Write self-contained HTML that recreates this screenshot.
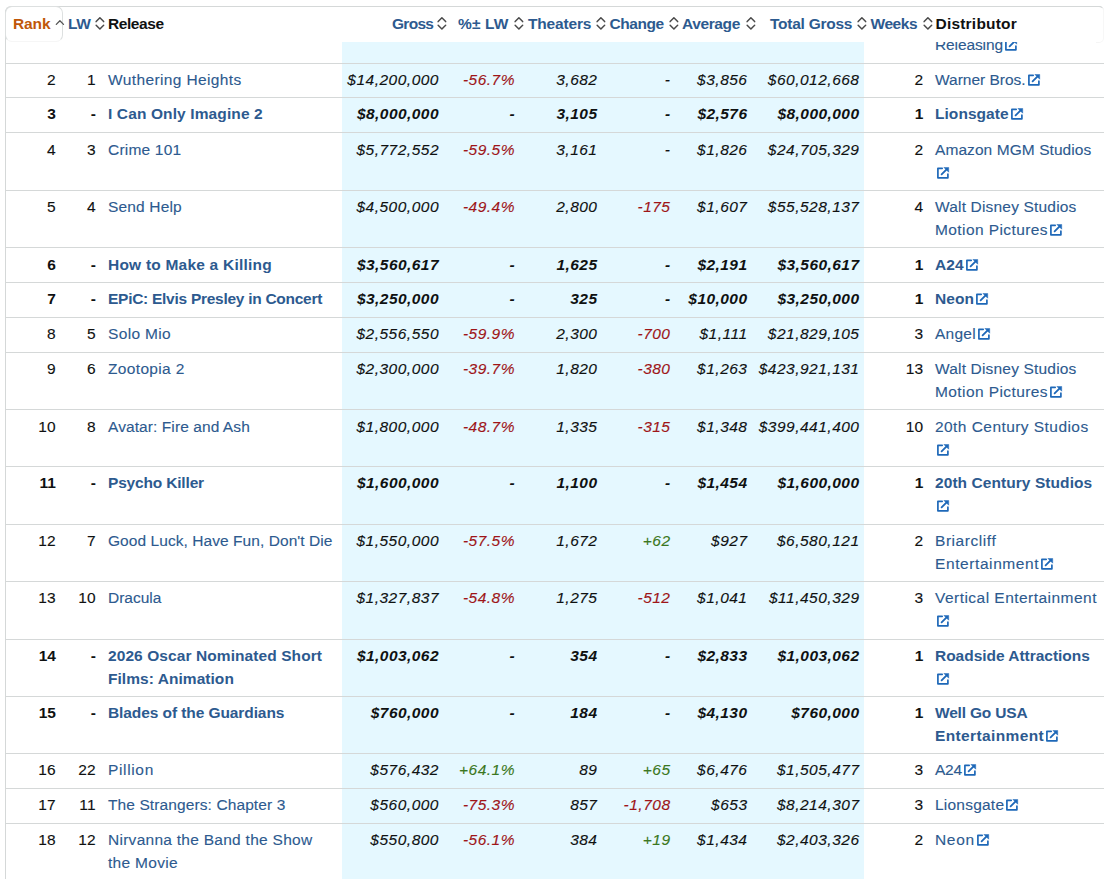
<!DOCTYPE html>
<html><head><meta charset="utf-8">
<style>
html,body{margin:0;padding:0;background:#fff;width:1113px;height:879px;overflow:hidden;position:relative}
body{font-family:"Liberation Sans",sans-serif;font-size:15.5px;line-height:22.67px;color:#0f1111}
#bluecol{position:absolute;left:342px;top:42px;width:522px;height:837px;background:#e5f8ff}
#lborder{position:absolute;left:5px;top:10px;width:1px;height:869px;background:#d5d8d8}
.hl{position:absolute;left:5px;width:1099px;height:1px;background:#d5d8d8}
.c{position:absolute;white-space:nowrap;-webkit-text-stroke:0.12px currentColor}
.c.b{-webkit-text-stroke:0px currentColor}
.r{text-align:right}
.tx{color:#0f1111;letter-spacing:0.3px}
.lk{color:#2d5a8f;letter-spacing:0.25px}
.it{font-style:italic;color:#0f1111;letter-spacing:0.5px}
.b{font-weight:bold;letter-spacing:0.05px}
.it.b{letter-spacing:0.45px}
.red{color:#9e1518}
.grn{color:#3a7720}
.ext{vertical-align:-2px;margin-left:2px}
#hdr{position:absolute;left:5px;top:6px;width:1098px;height:35px;background:#fff;border-top:1px solid #d5d8d8;border-left:1px solid #d5d8d8;border-radius:6px 5px 0 0}
#hdrr{position:absolute;left:1096px;top:6px;width:7px;height:35px;border-right:1px solid #f7f7f7;border-top:1px solid #d5d8d8;border-bottom:1px solid #f5f5f5;border-radius:0 5px 5px 0;background:transparent}
#rankbox{position:absolute;left:5px;top:6px;width:56px;height:34px;border:1px solid #dde0e0;border-bottom-color:#f6f6f6;border-radius:7px}
.h{position:absolute;font-weight:bold;color:#2d5a8f;white-space:nowrap;letter-spacing:-0.3px}
.ic{position:absolute;line-height:0}
.ic svg{display:block}
</style></head><body>
<div id="bluecol"></div>
<div id="lborder"></div>
<div class="hl" style="top:63px"></div><div class="hl" style="top:97px"></div><div class="hl" style="top:132px"></div><div class="hl" style="top:190px"></div><div class="hl" style="top:247px"></div><div class="hl" style="top:282px"></div><div class="hl" style="top:317px"></div><div class="hl" style="top:352px"></div><div class="hl" style="top:409px"></div><div class="hl" style="top:466px"></div><div class="hl" style="top:524px"></div><div class="hl" style="top:581px"></div><div class="hl" style="top:639px"></div><div class="hl" style="top:696px"></div><div class="hl" style="top:753px"></div><div class="hl" style="top:788px"></div><div class="hl" style="top:823px"></div>
<div class="c lk" style="top:34.00px;left:935.00px"><span style="letter-spacing:-0.113px">Releasing</span><svg class="ext" width="13" height="13" viewBox="0 0 13 13"><path d="M5.2 1.3H0.9V10.8H10.9V7.2" fill="none" stroke="#1e68b8" stroke-width="1.7" stroke-linejoin="round" stroke-linecap="round"/><path d="M4.6 7.4L9.6 2.4" stroke="#1e68b8" stroke-width="1.8" stroke-linecap="round"/><path d="M6.9 0.4H11.7V5.2Z" fill="#1e68b8" stroke="#1e68b8" stroke-width="0.5" stroke-linejoin="round"/></svg></div><div class="c r tx" style="top:69.00px;right:1057.00px">2</div><div class="c r tx" style="top:69.00px;right:1017.00px">1</div><div class="c lk" style="top:69.00px;left:108.00px"><span style="letter-spacing:0.375px">Wuthering Heights</span></div><div class="c r it" style="top:69.00px;right:674.00px">$14,200,000</div><div class="c r it red" style="top:69.00px;right:598.00px">-56.7%</div><div class="c r it" style="top:69.00px;right:515.50px">3,682</div><div class="c r it" style="top:69.00px;right:442.50px">-</div><div class="c r it" style="top:69.00px;right:365.50px">$3,856</div><div class="c r it" style="top:69.00px;right:253.50px">$60,012,668</div><div class="c r tx" style="top:69.00px;right:189.50px">2</div><div class="c lk" style="top:69.00px;left:935.00px"><span style="letter-spacing:-0.009px">Warner Bros.</span><svg class="ext" width="13" height="13" viewBox="0 0 13 13"><path d="M5.2 1.3H0.9V10.8H10.9V7.2" fill="none" stroke="#1e68b8" stroke-width="1.7" stroke-linejoin="round" stroke-linecap="round"/><path d="M4.6 7.4L9.6 2.4" stroke="#1e68b8" stroke-width="1.8" stroke-linecap="round"/><path d="M6.9 0.4H11.7V5.2Z" fill="#1e68b8" stroke="#1e68b8" stroke-width="0.5" stroke-linejoin="round"/></svg></div><div class="c r tx b" style="top:103.00px;right:1057.00px">3</div><div class="c r tx b" style="top:103.00px;right:1017.00px">-</div><div class="c lk b" style="top:103.00px;left:108.00px"><span style="letter-spacing:0.116px">I Can Only Imagine 2</span></div><div class="c r it b" style="top:103.00px;right:674.00px">$8,000,000</div><div class="c r it b" style="top:103.00px;right:598.00px">-</div><div class="c r it b" style="top:103.00px;right:515.50px">3,105</div><div class="c r it b" style="top:103.00px;right:442.50px">-</div><div class="c r it b" style="top:103.00px;right:365.50px">$2,576</div><div class="c r it b" style="top:103.00px;right:253.50px">$8,000,000</div><div class="c r tx b" style="top:103.00px;right:189.50px">1</div><div class="c lk b" style="top:103.00px;left:935.00px">Lionsgate<svg class="ext" width="13" height="13" viewBox="0 0 13 13"><path d="M5.2 1.3H0.9V10.8H10.9V7.2" fill="none" stroke="#1e68b8" stroke-width="1.7" stroke-linejoin="round" stroke-linecap="round"/><path d="M4.6 7.4L9.6 2.4" stroke="#1e68b8" stroke-width="1.8" stroke-linecap="round"/><path d="M6.9 0.4H11.7V5.2Z" fill="#1e68b8" stroke="#1e68b8" stroke-width="0.5" stroke-linejoin="round"/></svg></div><div class="c r tx" style="top:139.00px;right:1057.00px">4</div><div class="c r tx" style="top:139.00px;right:1017.00px">3</div><div class="c lk" style="top:139.00px;left:108.00px"><span style="letter-spacing:0.2px">Crime 101</span></div><div class="c r it" style="top:139.00px;right:674.00px">$5,772,552</div><div class="c r it red" style="top:139.00px;right:598.00px">-59.5%</div><div class="c r it" style="top:139.00px;right:515.50px">3,161</div><div class="c r it" style="top:139.00px;right:442.50px">-</div><div class="c r it" style="top:139.00px;right:365.50px">$1,826</div><div class="c r it" style="top:139.00px;right:253.50px">$24,705,329</div><div class="c r tx" style="top:139.00px;right:189.50px">2</div><div class="c lk" style="top:139.00px;left:935.00px"><span style="letter-spacing:0.071px">Amazon MGM Studios</span><br><svg class="ext" width="13" height="13" viewBox="0 0 13 13"><path d="M5.2 1.3H0.9V10.8H10.9V7.2" fill="none" stroke="#1e68b8" stroke-width="1.7" stroke-linejoin="round" stroke-linecap="round"/><path d="M4.6 7.4L9.6 2.4" stroke="#1e68b8" stroke-width="1.8" stroke-linecap="round"/><path d="M6.9 0.4H11.7V5.2Z" fill="#1e68b8" stroke="#1e68b8" stroke-width="0.5" stroke-linejoin="round"/></svg></div><div class="c r tx" style="top:196.00px;right:1057.00px">5</div><div class="c r tx" style="top:196.00px;right:1017.00px">4</div><div class="c lk" style="top:196.00px;left:108.00px"><span style="letter-spacing:0.162px">Send Help</span></div><div class="c r it" style="top:196.00px;right:674.00px">$4,500,000</div><div class="c r it red" style="top:196.00px;right:598.00px">-49.4%</div><div class="c r it" style="top:196.00px;right:515.50px">2,800</div><div class="c r it red" style="top:196.00px;right:442.50px">-175</div><div class="c r it" style="top:196.00px;right:365.50px">$1,607</div><div class="c r it" style="top:196.00px;right:253.50px">$55,528,137</div><div class="c r tx" style="top:196.00px;right:189.50px">4</div><div class="c lk" style="top:196.00px;left:935.00px"><span style="letter-spacing:0.178px">Walt Disney Studios</span><br><span style="letter-spacing:0.414px">Motion Pictures</span><svg class="ext" width="13" height="13" viewBox="0 0 13 13"><path d="M5.2 1.3H0.9V10.8H10.9V7.2" fill="none" stroke="#1e68b8" stroke-width="1.7" stroke-linejoin="round" stroke-linecap="round"/><path d="M4.6 7.4L9.6 2.4" stroke="#1e68b8" stroke-width="1.8" stroke-linecap="round"/><path d="M6.9 0.4H11.7V5.2Z" fill="#1e68b8" stroke="#1e68b8" stroke-width="0.5" stroke-linejoin="round"/></svg></div><div class="c r tx b" style="top:254.00px;right:1057.00px">6</div><div class="c r tx b" style="top:254.00px;right:1017.00px">-</div><div class="c lk b" style="top:254.00px;left:108.00px"><span style="letter-spacing:0.215px">How to Make a Killing</span></div><div class="c r it b" style="top:254.00px;right:674.00px">$3,560,617</div><div class="c r it b" style="top:254.00px;right:598.00px">-</div><div class="c r it b" style="top:254.00px;right:515.50px">1,625</div><div class="c r it b" style="top:254.00px;right:442.50px">-</div><div class="c r it b" style="top:254.00px;right:365.50px">$2,191</div><div class="c r it b" style="top:254.00px;right:253.50px">$3,560,617</div><div class="c r tx b" style="top:254.00px;right:189.50px">1</div><div class="c lk b" style="top:254.00px;left:935.00px">A24<svg class="ext" width="13" height="13" viewBox="0 0 13 13"><path d="M5.2 1.3H0.9V10.8H10.9V7.2" fill="none" stroke="#1e68b8" stroke-width="1.7" stroke-linejoin="round" stroke-linecap="round"/><path d="M4.6 7.4L9.6 2.4" stroke="#1e68b8" stroke-width="1.8" stroke-linecap="round"/><path d="M6.9 0.4H11.7V5.2Z" fill="#1e68b8" stroke="#1e68b8" stroke-width="0.5" stroke-linejoin="round"/></svg></div><div class="c r tx b" style="top:288.00px;right:1057.00px">7</div><div class="c r tx b" style="top:288.00px;right:1017.00px">-</div><div class="c lk b" style="top:288.00px;left:108.00px"><span style="letter-spacing:-0.272px">EPiC: Elvis Presley in Concert</span></div><div class="c r it b" style="top:288.00px;right:674.00px">$3,250,000</div><div class="c r it b" style="top:288.00px;right:598.00px">-</div><div class="c r it b" style="top:288.00px;right:515.50px">325</div><div class="c r it b" style="top:288.00px;right:442.50px">-</div><div class="c r it b" style="top:288.00px;right:365.50px">$10,000</div><div class="c r it b" style="top:288.00px;right:253.50px">$3,250,000</div><div class="c r tx b" style="top:288.00px;right:189.50px">1</div><div class="c lk b" style="top:288.00px;left:935.00px">Neon<svg class="ext" width="13" height="13" viewBox="0 0 13 13"><path d="M5.2 1.3H0.9V10.8H10.9V7.2" fill="none" stroke="#1e68b8" stroke-width="1.7" stroke-linejoin="round" stroke-linecap="round"/><path d="M4.6 7.4L9.6 2.4" stroke="#1e68b8" stroke-width="1.8" stroke-linecap="round"/><path d="M6.9 0.4H11.7V5.2Z" fill="#1e68b8" stroke="#1e68b8" stroke-width="0.5" stroke-linejoin="round"/></svg></div><div class="c r tx" style="top:323.00px;right:1057.00px">8</div><div class="c r tx" style="top:323.00px;right:1017.00px">5</div><div class="c lk" style="top:323.00px;left:108.00px"><span style="letter-spacing:0.343px">Solo Mio</span></div><div class="c r it" style="top:323.00px;right:674.00px">$2,556,550</div><div class="c r it red" style="top:323.00px;right:598.00px">-59.9%</div><div class="c r it" style="top:323.00px;right:515.50px">2,300</div><div class="c r it red" style="top:323.00px;right:442.50px">-700</div><div class="c r it" style="top:323.00px;right:365.50px">$1,111</div><div class="c r it" style="top:323.00px;right:253.50px">$21,829,105</div><div class="c r tx" style="top:323.00px;right:189.50px">3</div><div class="c lk" style="top:323.00px;left:935.00px">Angel<svg class="ext" width="13" height="13" viewBox="0 0 13 13"><path d="M5.2 1.3H0.9V10.8H10.9V7.2" fill="none" stroke="#1e68b8" stroke-width="1.7" stroke-linejoin="round" stroke-linecap="round"/><path d="M4.6 7.4L9.6 2.4" stroke="#1e68b8" stroke-width="1.8" stroke-linecap="round"/><path d="M6.9 0.4H11.7V5.2Z" fill="#1e68b8" stroke="#1e68b8" stroke-width="0.5" stroke-linejoin="round"/></svg></div><div class="c r tx" style="top:358.00px;right:1057.00px">9</div><div class="c r tx" style="top:358.00px;right:1017.00px">6</div><div class="c lk" style="top:358.00px;left:108.00px"><span style="letter-spacing:0.344px">Zootopia 2</span></div><div class="c r it" style="top:358.00px;right:674.00px">$2,300,000</div><div class="c r it red" style="top:358.00px;right:598.00px">-39.7%</div><div class="c r it" style="top:358.00px;right:515.50px">1,820</div><div class="c r it red" style="top:358.00px;right:442.50px">-380</div><div class="c r it" style="top:358.00px;right:365.50px">$1,263</div><div class="c r it" style="top:358.00px;right:253.50px">$423,921,131</div><div class="c r tx" style="top:358.00px;right:189.50px">13</div><div class="c lk" style="top:358.00px;left:935.00px"><span style="letter-spacing:0.178px">Walt Disney Studios</span><br><span style="letter-spacing:0.414px">Motion Pictures</span><svg class="ext" width="13" height="13" viewBox="0 0 13 13"><path d="M5.2 1.3H0.9V10.8H10.9V7.2" fill="none" stroke="#1e68b8" stroke-width="1.7" stroke-linejoin="round" stroke-linecap="round"/><path d="M4.6 7.4L9.6 2.4" stroke="#1e68b8" stroke-width="1.8" stroke-linecap="round"/><path d="M6.9 0.4H11.7V5.2Z" fill="#1e68b8" stroke="#1e68b8" stroke-width="0.5" stroke-linejoin="round"/></svg></div><div class="c r tx" style="top:416.00px;right:1057.00px">10</div><div class="c r tx" style="top:416.00px;right:1017.00px">8</div><div class="c lk" style="top:416.00px;left:108.00px"><span style="letter-spacing:0.084px">Avatar: Fire and Ash</span></div><div class="c r it" style="top:416.00px;right:674.00px">$1,800,000</div><div class="c r it red" style="top:416.00px;right:598.00px">-48.7%</div><div class="c r it" style="top:416.00px;right:515.50px">1,335</div><div class="c r it red" style="top:416.00px;right:442.50px">-315</div><div class="c r it" style="top:416.00px;right:365.50px">$1,348</div><div class="c r it" style="top:416.00px;right:253.50px">$399,441,400</div><div class="c r tx" style="top:416.00px;right:189.50px">10</div><div class="c lk" style="top:416.00px;left:935.00px"><span style="letter-spacing:0.442px">20th Century Studios</span><br><svg class="ext" width="13" height="13" viewBox="0 0 13 13"><path d="M5.2 1.3H0.9V10.8H10.9V7.2" fill="none" stroke="#1e68b8" stroke-width="1.7" stroke-linejoin="round" stroke-linecap="round"/><path d="M4.6 7.4L9.6 2.4" stroke="#1e68b8" stroke-width="1.8" stroke-linecap="round"/><path d="M6.9 0.4H11.7V5.2Z" fill="#1e68b8" stroke="#1e68b8" stroke-width="0.5" stroke-linejoin="round"/></svg></div><div class="c r tx b" style="top:472.00px;right:1057.00px">11</div><div class="c r tx b" style="top:472.00px;right:1017.00px">-</div><div class="c lk b" style="top:472.00px;left:108.00px"><span style="letter-spacing:-0.175px">Psycho Killer</span></div><div class="c r it b" style="top:472.00px;right:674.00px">$1,600,000</div><div class="c r it b" style="top:472.00px;right:598.00px">-</div><div class="c r it b" style="top:472.00px;right:515.50px">1,100</div><div class="c r it b" style="top:472.00px;right:442.50px">-</div><div class="c r it b" style="top:472.00px;right:365.50px">$1,454</div><div class="c r it b" style="top:472.00px;right:253.50px">$1,600,000</div><div class="c r tx b" style="top:472.00px;right:189.50px">1</div><div class="c lk b" style="top:472.00px;left:935.00px"><span style="letter-spacing:0.068px">20th Century Studios</span><br><svg class="ext" width="13" height="13" viewBox="0 0 13 13"><path d="M5.2 1.3H0.9V10.8H10.9V7.2" fill="none" stroke="#1e68b8" stroke-width="1.7" stroke-linejoin="round" stroke-linecap="round"/><path d="M4.6 7.4L9.6 2.4" stroke="#1e68b8" stroke-width="1.8" stroke-linecap="round"/><path d="M6.9 0.4H11.7V5.2Z" fill="#1e68b8" stroke="#1e68b8" stroke-width="0.5" stroke-linejoin="round"/></svg></div><div class="c r tx" style="top:530.00px;right:1057.00px">12</div><div class="c r tx" style="top:530.00px;right:1017.00px">7</div><div class="c lk" style="top:530.00px;left:108.00px"><span style="letter-spacing:0.062px">Good Luck, Have Fun, Don't Die</span></div><div class="c r it" style="top:530.00px;right:674.00px">$1,550,000</div><div class="c r it red" style="top:530.00px;right:598.00px">-57.5%</div><div class="c r it" style="top:530.00px;right:515.50px">1,672</div><div class="c r it grn" style="top:530.00px;right:442.50px">+62</div><div class="c r it" style="top:530.00px;right:365.50px">$927</div><div class="c r it" style="top:530.00px;right:253.50px">$6,580,121</div><div class="c r tx" style="top:530.00px;right:189.50px">2</div><div class="c lk" style="top:530.00px;left:935.00px"><span style="letter-spacing:0.556px">Briarcliff</span><br><span style="letter-spacing:0.592px">Entertainment</span><svg class="ext" width="13" height="13" viewBox="0 0 13 13"><path d="M5.2 1.3H0.9V10.8H10.9V7.2" fill="none" stroke="#1e68b8" stroke-width="1.7" stroke-linejoin="round" stroke-linecap="round"/><path d="M4.6 7.4L9.6 2.4" stroke="#1e68b8" stroke-width="1.8" stroke-linecap="round"/><path d="M6.9 0.4H11.7V5.2Z" fill="#1e68b8" stroke="#1e68b8" stroke-width="0.5" stroke-linejoin="round"/></svg></div><div class="c r tx" style="top:587.00px;right:1057.00px">13</div><div class="c r tx" style="top:587.00px;right:1017.00px">10</div><div class="c lk" style="top:587.00px;left:108.00px"><span style="letter-spacing:-0.017px">Dracula</span></div><div class="c r it" style="top:587.00px;right:674.00px">$1,327,837</div><div class="c r it red" style="top:587.00px;right:598.00px">-54.8%</div><div class="c r it" style="top:587.00px;right:515.50px">1,275</div><div class="c r it red" style="top:587.00px;right:442.50px">-512</div><div class="c r it" style="top:587.00px;right:365.50px">$1,041</div><div class="c r it" style="top:587.00px;right:253.50px">$11,450,329</div><div class="c r tx" style="top:587.00px;right:189.50px">3</div><div class="c lk" style="top:587.00px;left:935.00px"><span style="letter-spacing:0.467px">Vertical Entertainment</span><br><svg class="ext" width="13" height="13" viewBox="0 0 13 13"><path d="M5.2 1.3H0.9V10.8H10.9V7.2" fill="none" stroke="#1e68b8" stroke-width="1.7" stroke-linejoin="round" stroke-linecap="round"/><path d="M4.6 7.4L9.6 2.4" stroke="#1e68b8" stroke-width="1.8" stroke-linecap="round"/><path d="M6.9 0.4H11.7V5.2Z" fill="#1e68b8" stroke="#1e68b8" stroke-width="0.5" stroke-linejoin="round"/></svg></div><div class="c r tx b" style="top:645.00px;right:1057.00px">14</div><div class="c r tx b" style="top:645.00px;right:1017.00px">-</div><div class="c lk b" style="top:645.00px;left:108.00px"><span style="letter-spacing:0.084px">2026 Oscar Nominated Short</span><br><span style="letter-spacing:0.047px">Films: Animation</span></div><div class="c r it b" style="top:645.00px;right:674.00px">$1,003,062</div><div class="c r it b" style="top:645.00px;right:598.00px">-</div><div class="c r it b" style="top:645.00px;right:515.50px">354</div><div class="c r it b" style="top:645.00px;right:442.50px">-</div><div class="c r it b" style="top:645.00px;right:365.50px">$2,833</div><div class="c r it b" style="top:645.00px;right:253.50px">$1,003,062</div><div class="c r tx b" style="top:645.00px;right:189.50px">1</div><div class="c lk b" style="top:645.00px;left:935.00px"><span style="letter-spacing:-0.026px">Roadside Attractions</span><br><svg class="ext" width="13" height="13" viewBox="0 0 13 13"><path d="M5.2 1.3H0.9V10.8H10.9V7.2" fill="none" stroke="#1e68b8" stroke-width="1.7" stroke-linejoin="round" stroke-linecap="round"/><path d="M4.6 7.4L9.6 2.4" stroke="#1e68b8" stroke-width="1.8" stroke-linecap="round"/><path d="M6.9 0.4H11.7V5.2Z" fill="#1e68b8" stroke="#1e68b8" stroke-width="0.5" stroke-linejoin="round"/></svg></div><div class="c r tx b" style="top:702.00px;right:1057.00px">15</div><div class="c r tx b" style="top:702.00px;right:1017.00px">-</div><div class="c lk b" style="top:702.00px;left:108.00px"><span style="letter-spacing:-0.086px">Blades of the Guardians</span></div><div class="c r it b" style="top:702.00px;right:674.00px">$760,000</div><div class="c r it b" style="top:702.00px;right:598.00px">-</div><div class="c r it b" style="top:702.00px;right:515.50px">184</div><div class="c r it b" style="top:702.00px;right:442.50px">-</div><div class="c r it b" style="top:702.00px;right:365.50px">$4,130</div><div class="c r it b" style="top:702.00px;right:253.50px">$760,000</div><div class="c r tx b" style="top:702.00px;right:189.50px">1</div><div class="c lk b" style="top:702.00px;left:935.00px"><span style="letter-spacing:-0.18px">Well Go USA</span><br><span style="letter-spacing:0.375px">Entertainment</span><svg class="ext" width="13" height="13" viewBox="0 0 13 13"><path d="M5.2 1.3H0.9V10.8H10.9V7.2" fill="none" stroke="#1e68b8" stroke-width="1.7" stroke-linejoin="round" stroke-linecap="round"/><path d="M4.6 7.4L9.6 2.4" stroke="#1e68b8" stroke-width="1.8" stroke-linecap="round"/><path d="M6.9 0.4H11.7V5.2Z" fill="#1e68b8" stroke="#1e68b8" stroke-width="0.5" stroke-linejoin="round"/></svg></div><div class="c r tx" style="top:759.00px;right:1057.00px">16</div><div class="c r tx" style="top:759.00px;right:1017.00px">22</div><div class="c lk" style="top:759.00px;left:108.00px"><span style="letter-spacing:0.65px">Pillion</span></div><div class="c r it" style="top:759.00px;right:674.00px">$576,432</div><div class="c r it grn" style="top:759.00px;right:598.00px">+64.1%</div><div class="c r it" style="top:759.00px;right:515.50px">89</div><div class="c r it grn" style="top:759.00px;right:442.50px">+65</div><div class="c r it" style="top:759.00px;right:365.50px">$6,476</div><div class="c r it" style="top:759.00px;right:253.50px">$1,505,477</div><div class="c r tx" style="top:759.00px;right:189.50px">3</div><div class="c lk" style="top:759.00px;left:935.00px"><span style="letter-spacing:-0.25px">A24</span><svg class="ext" width="13" height="13" viewBox="0 0 13 13"><path d="M5.2 1.3H0.9V10.8H10.9V7.2" fill="none" stroke="#1e68b8" stroke-width="1.7" stroke-linejoin="round" stroke-linecap="round"/><path d="M4.6 7.4L9.6 2.4" stroke="#1e68b8" stroke-width="1.8" stroke-linecap="round"/><path d="M6.9 0.4H11.7V5.2Z" fill="#1e68b8" stroke="#1e68b8" stroke-width="0.5" stroke-linejoin="round"/></svg></div><div class="c r tx" style="top:794.00px;right:1057.00px">17</div><div class="c r tx" style="top:794.00px;right:1017.00px">11</div><div class="c lk" style="top:794.00px;left:108.00px"><span style="letter-spacing:0.104px">The Strangers: Chapter 3</span></div><div class="c r it" style="top:794.00px;right:674.00px">$560,000</div><div class="c r it red" style="top:794.00px;right:598.00px">-75.3%</div><div class="c r it" style="top:794.00px;right:515.50px">857</div><div class="c r it red" style="top:794.00px;right:442.50px">-1,708</div><div class="c r it" style="top:794.00px;right:365.50px">$653</div><div class="c r it" style="top:794.00px;right:253.50px">$8,214,307</div><div class="c r tx" style="top:794.00px;right:189.50px">3</div><div class="c lk" style="top:794.00px;left:935.00px"><span style="letter-spacing:0.225px">Lionsgate</span><svg class="ext" width="13" height="13" viewBox="0 0 13 13"><path d="M5.2 1.3H0.9V10.8H10.9V7.2" fill="none" stroke="#1e68b8" stroke-width="1.7" stroke-linejoin="round" stroke-linecap="round"/><path d="M4.6 7.4L9.6 2.4" stroke="#1e68b8" stroke-width="1.8" stroke-linecap="round"/><path d="M6.9 0.4H11.7V5.2Z" fill="#1e68b8" stroke="#1e68b8" stroke-width="0.5" stroke-linejoin="round"/></svg></div><div class="c r tx" style="top:829.00px;right:1057.00px">18</div><div class="c r tx" style="top:829.00px;right:1017.00px">12</div><div class="c lk" style="top:829.00px;left:108.00px"><span style="letter-spacing:0.272px">Nirvanna the Band the Show</span><br><span style="letter-spacing:0.3px">the Movie</span></div><div class="c r it" style="top:829.00px;right:674.00px">$550,800</div><div class="c r it red" style="top:829.00px;right:598.00px">-56.1%</div><div class="c r it" style="top:829.00px;right:515.50px">384</div><div class="c r it grn" style="top:829.00px;right:442.50px">+19</div><div class="c r it" style="top:829.00px;right:365.50px">$1,434</div><div class="c r it" style="top:829.00px;right:253.50px">$2,403,326</div><div class="c r tx" style="top:829.00px;right:189.50px">2</div><div class="c lk" style="top:829.00px;left:935.00px"><span style="letter-spacing:0.667px">Neon</span><svg class="ext" width="13" height="13" viewBox="0 0 13 13"><path d="M5.2 1.3H0.9V10.8H10.9V7.2" fill="none" stroke="#1e68b8" stroke-width="1.7" stroke-linejoin="round" stroke-linecap="round"/><path d="M4.6 7.4L9.6 2.4" stroke="#1e68b8" stroke-width="1.8" stroke-linecap="round"/><path d="M6.9 0.4H11.7V5.2Z" fill="#1e68b8" stroke="#1e68b8" stroke-width="0.5" stroke-linejoin="round"/></svg></div>
<div id="hdr"></div>
<div id="hdrr"></div>
<div id="rankbox"></div>
<div class="h" style="left:13px;top:13.00px;color:#c05708;letter-spacing:-0.1px">Rank</div><div class="ic" style="left:54.10px;top:18px"><svg width="12" height="10" viewBox="0 0 12 10"><path d="M2.3 6.4L5.9 2.7L9.5 6.4" fill="none" stroke="#555" stroke-width="1.3" stroke-linecap="round" stroke-linejoin="round"/></svg></div><div class="h" style="left:68px;top:13.00px;letter-spacing:-0.4px">LW</div><div class="ic" style="left:94.00px;top:16px"><svg width="12" height="16" viewBox="0 0 12 16"><path d="M2.15 5.6L5.9 1.75L9.65 5.6M2.15 9.3L5.9 13.05L9.65 9.3" fill="none" stroke="#4a4a4a" stroke-width="1.5" stroke-linecap="round" stroke-linejoin="round"/></svg></div><div class="h" style="left:108px;top:13.00px;color:#0f1111;letter-spacing:-0.42px">Release</div><div class="h" style="left:392px;top:13.00px;letter-spacing:-0.72px">Gross</div><div class="ic" style="left:436.10px;top:16px"><svg width="12" height="16" viewBox="0 0 12 16"><path d="M2.15 5.6L5.9 1.75L9.65 5.6M2.15 9.3L5.9 13.05L9.65 9.3" fill="none" stroke="#4a4a4a" stroke-width="1.5" stroke-linecap="round" stroke-linejoin="round"/></svg></div><div class="h" style="left:458px;top:13.00px;letter-spacing:0.12px">%± LW</div><div class="ic" style="left:512.60px;top:16px"><svg width="12" height="16" viewBox="0 0 12 16"><path d="M2.15 5.6L5.9 1.75L9.65 5.6M2.15 9.3L5.9 13.05L9.65 9.3" fill="none" stroke="#4a4a4a" stroke-width="1.5" stroke-linecap="round" stroke-linejoin="round"/></svg></div><div class="h" style="left:528px;top:13.00px;letter-spacing:-0.16px">Theaters</div><div class="ic" style="left:595.20px;top:16px"><svg width="12" height="16" viewBox="0 0 12 16"><path d="M2.15 5.6L5.9 1.75L9.65 5.6M2.15 9.3L5.9 13.05L9.65 9.3" fill="none" stroke="#4a4a4a" stroke-width="1.5" stroke-linecap="round" stroke-linejoin="round"/></svg></div><div class="h" style="left:609.5px;top:13.00px;letter-spacing:-0.46px">Change</div><div class="ic" style="left:668.20px;top:16px"><svg width="12" height="16" viewBox="0 0 12 16"><path d="M2.15 5.6L5.9 1.75L9.65 5.6M2.15 9.3L5.9 13.05L9.65 9.3" fill="none" stroke="#4a4a4a" stroke-width="1.5" stroke-linecap="round" stroke-linejoin="round"/></svg></div><div class="h" style="left:682px;top:13.00px;letter-spacing:-0.38px">Average</div><div class="ic" style="left:745.10px;top:16px"><svg width="12" height="16" viewBox="0 0 12 16"><path d="M2.15 5.6L5.9 1.75L9.65 5.6M2.15 9.3L5.9 13.05L9.65 9.3" fill="none" stroke="#4a4a4a" stroke-width="1.5" stroke-linecap="round" stroke-linejoin="round"/></svg></div><div class="h" style="left:770px;top:13.00px;letter-spacing:-0.25px">Total Gross</div><div class="ic" style="left:856.10px;top:16px"><svg width="12" height="16" viewBox="0 0 12 16"><path d="M2.15 5.6L5.9 1.75L9.65 5.6M2.15 9.3L5.9 13.05L9.65 9.3" fill="none" stroke="#4a4a4a" stroke-width="1.5" stroke-linecap="round" stroke-linejoin="round"/></svg></div><div class="h" style="left:870.5px;top:13.00px;letter-spacing:-0.43px">Weeks</div><div class="ic" style="left:922.10px;top:16px"><svg width="12" height="16" viewBox="0 0 12 16"><path d="M2.15 5.6L5.9 1.75L9.65 5.6M2.15 9.3L5.9 13.05L9.65 9.3" fill="none" stroke="#4a4a4a" stroke-width="1.5" stroke-linecap="round" stroke-linejoin="round"/></svg></div><div class="h" style="left:935.5px;top:13.00px;color:#0f1111;letter-spacing:0.21px">Distributor</div>
</body></html>
